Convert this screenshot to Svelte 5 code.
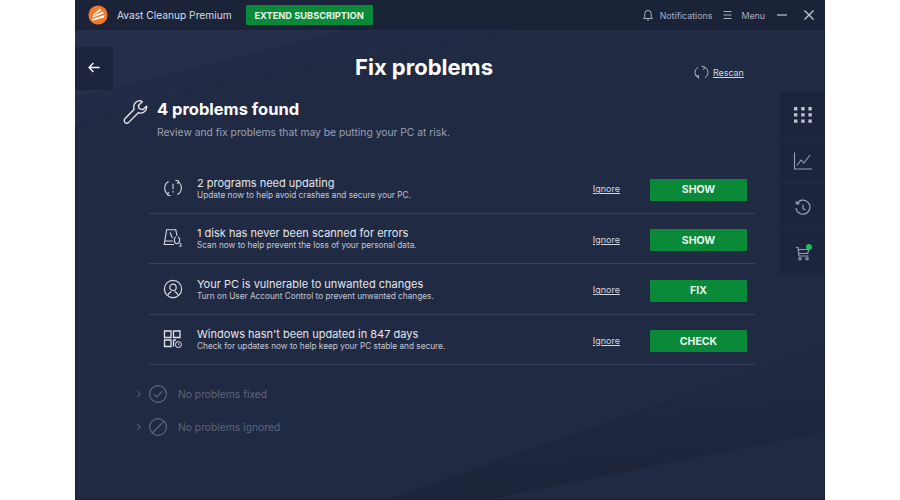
<script>
  const problems = [
    { icon: 'update', title: '2 programs need updating', text: 'Update now to help avoid crashes and secure your PC.', action: 'SHOW' },
    { icon: 'disk', title: '1 disk has never been scanned for errors', text: 'Scan now to help prevent the loss of your personal data.', action: 'SHOW' },
    { icon: 'user', title: 'Your PC is vulnerable to unwanted changes', text: 'Turn on User Account Control to prevent unwanted changes.', action: 'FIX' },
    { icon: 'windows', title: "Windows hasn't been updated in 847 days", text: 'Check for updates now to help keep your PC stable and secure.', action: 'CHECK' }
  ];
</script>

<div class="window">
  <svg class="backdrop" viewBox="0 0 750 500" aria-hidden="true">
    <defs>
      <linearGradient id="shade" x1="0.75" y1="0.9" x2="0.55" y2="0.1">
        <stop offset="0" stop-color="#1a2136" stop-opacity="0.7" />
        <stop offset="1" stop-color="#1a2136" stop-opacity="0" />
      </linearGradient>
    </defs>
    <polygon points="0,98 270,30 0,30" fill="#262f4a" />
    <polygon points="270,30 440,30 130,85 0,125 0,98" fill="#232c46" />
    <polygon points="311,500 708,360 750,340 750,432 421,498" fill="url(#shade)" />
  </svg>

  <header class="titlebar">
    <svg class="logo" width="20" height="20" viewBox="0 0 20 20">
      <circle cx="10" cy="10" r="9.6" fill="#f5792a" />
      <path d="M3.6 14.2 16.4 10 16 12.6 4.4 15.8Z M4 11.6 15 6.6 15.6 8.4 4.6 12.6Z M5 9.4 12 3.8 13.4 5.2 5.6 10.2Z" fill="#fff" />
    </svg>
    <span class="brand">Avast Cleanup Premium</span>
    <button class="extend">EXTEND SUBSCRIPTION</button>
    <div class="spacer"></div>
    <svg class="tool" width="12" height="12" viewBox="0 0 12 12" fill="none" stroke="#a9afc0">
      <path d="M1.5 9.5h9L9.2 7.8V4.6a3.2 3.2 0 0 0-6.4 0v3.2ZM5 11h2" />
    </svg>
    <span class="tool-label notif">Notifications</span>
    <svg class="tool" width="12" height="12" viewBox="0 0 12 12" fill="none" stroke="#a9afc0">
      <path d="M1.5 2.5h8M1.5 6h8M1.5 9.5h8" />
    </svg>
    <span class="tool-label menu">Menu</span>
    <svg class="tool minimize" width="10" height="10" viewBox="0 0 10 10" stroke="#b9becd" stroke-width="1.3">
      <path d="M0 5h10" />
    </svg>
    <svg class="tool" width="10" height="10" viewBox="0 0 10 10" stroke="#c6cad6" stroke-width="1.3">
      <path d="M.5.5l9 9M9.5.5l-9 9" />
    </svg>
  </header>

  <div class="content">
    <main class="main">
      <div class="top">
        <button class="back" aria-label="Back">
          <svg width="12" height="11" viewBox="0 0 12 11" fill="none" stroke="#fff" stroke-width="1.3">
            <path d="M11.5 5.5H1M5.4 1 1 5.5 5.4 10" />
          </svg>
        </button>
        <h1>Fix problems</h1>
        <div class="rescan">
          <svg width="15" height="15" viewBox="0 0 15 15" fill="none" stroke="#a9afc0">
            <path d="M4.5 13A6 6 0 0 1 4.2 2.2M10.5 2A6 6 0 0 1 10.8 12.8M4.5 13.6 4.6 10.6 1.8 10.6M7.5 1 10.5 2 9.6 4.8" />
          </svg>
          <span>Rescan</span>
        </div>
      </div>

      <section class="summary">
        <svg class="wrench" width="26" height="26" viewBox="0 0 26 26" fill="none" stroke="#eceef3" stroke-width="1.3" stroke-linejoin="round">
          <path d="M16.6 1.7a6.3 6.3 0 0 0-5.4 8.6L1.9 19.8a2.8 2.8 0 0 0 0 3.6 2.8 2.8 0 0 0 3.8 0l9.6-9.7a6.3 6.3 0 0 0 8.4-6.6l-4 3.6-3.4-1-1-3.2 4-3.8a6 6 0 0 0-2.7-1Z" />
        </svg>
        <div>
          <h2>4 problems found</h2>
          <p>Review and fix problems that may be putting your PC at risk.</p>
        </div>
      </section>

      <ul class="list">
        {#each problems as p}
          <li class="row">
            <div class="row-icon">
              {#if p.icon === 'update'}
                <svg width="20" height="20" viewBox="0 0 20 20" fill="none" stroke="#d5d8e2" stroke-width="1.1">
                  <path d="M5 16.5A7.8 7.8 0 0 1 5.6 3.4M15 3.4a7.8 7.8 0 0 1-.6 13.2M12.3 2.2 15.4 3l-.8 3M7.7 17.8l-3-.8.8-3M10 5.8v5.4M10 13v1.4" />
                </svg>
              {:else if p.icon === 'disk'}
                <svg width="20" height="20" viewBox="0 0 20 20" fill="none" stroke="#d5d8e2" stroke-width="1.1">
                  <path d="M11 16.5H1.2L3.6 1.8h9.2l1.2 6M1.4 13h8.4M7 4.5 9.5 10M11.4 10.5v2.6a2.6 2.6 0 0 0 5.2 0v-2.6M11.4 10.5l1.4-1.6M16.6 10.5l-1.4-1.6M17.8 15v3.2h-1.6" />
                </svg>
              {:else if p.icon === 'user'}
                <svg width="20" height="20" viewBox="0 0 20 20" fill="none" stroke="#d5d8e2" stroke-width="1.2">
                  <circle cx="10" cy="10" r="8.6" />
                  <circle cx="10" cy="8.4" r="3.2" />
                  <path d="M4.8 16.4c.6-2.6 2-3.2 3.4-3.8M15.2 16.4c-.6-2.6-2-3.2-3.4-3.8" />
                </svg>
              {:else}
                <svg width="20" height="20" viewBox="0 0 20 20" fill="none" stroke="#e1e4ec" stroke-width="1.3">
                  <path d="M1.5 2h6.5v6.5H1.5ZM10.5 2H17v6.5h-6.5ZM1.5 11h6.5v6.5H1.5ZM10.5 11h2.5M10.5 11v6.5" />
                  <circle cx="15.4" cy="15.6" r="3" stroke-width="1" />
                  <path d="M15.4 14.2v1.5l1 .6" stroke-width=".8" />
                </svg>
              {/if}
            </div>
            <div class="row-text">
              <div class="row-title">{p.title}</div>
              <div class="row-sub">{p.text}</div>
            </div>
            <span class="ignore">Ignore</span>
            <button class="action">{p.action}</button>
          </li>
        {/each}
      </ul>

      <div class="collapsed">
        <div class="fold">
          <svg class="chev" width="6" height="8" viewBox="0 0 6 8" fill="none" stroke="#5f667c"><path d="M1 .8 4.4 4 1 7.2" /></svg>
          <svg width="20" height="20" viewBox="0 0 20 20" fill="none" stroke="#5f667c" stroke-width="1.2">
            <circle cx="10" cy="10" r="8.4" />
            <path d="M5.8 10.2 8.8 13l5.4-5.6" />
          </svg>
          <span>No problems fixed</span>
        </div>
        <div class="fold">
          <svg class="chev" width="6" height="8" viewBox="0 0 6 8" fill="none" stroke="#5f667c"><path d="M1 .8 4.4 4 1 7.2" /></svg>
          <svg width="20" height="20" viewBox="0 0 20 20" fill="none" stroke="#5f667c" stroke-width="1.2">
            <circle cx="10" cy="10" r="8.4" />
            <path d="M4.2 16 16 4.2" />
          </svg>
          <span>No problems ignored</span>
        </div>
      </div>
    </main>

    <nav class="rail">
      <div class="rail-item">
        <svg width="20" height="20" viewBox="0 0 20 20" fill="#bfc3ce">
          <path d="M1 2h3.4v3.4H1ZM8.2 2h3.4v3.4H8.2ZM15.4 2h3.4v3.4h-3.4ZM1 8.2h3.4v3.4H1ZM8.2 8.2h3.4v3.4H8.2ZM15.4 8.2h3.4v3.4h-3.4ZM1 14.4h3.4v3.4H1ZM8.2 14.4h3.4v3.4H8.2ZM15.4 14.4h3.4v3.4h-3.4Z" />
        </svg>
      </div>
      <div class="rail-item">
        <svg width="20" height="20" viewBox="0 0 20 20" fill="none" stroke="#989eb1" stroke-width="1.1">
          <path d="M1.5 1.5v16.5h17.5M4 14.5l4-5.5 3 3 6-8" />
        </svg>
      </div>
      <div class="rail-item history">
        <svg width="18" height="18" viewBox="0 0 18 18" fill="none" stroke="#989eb1" stroke-width="1.2">
          <path d="M3 4.5A7 7 0 1 1 2 9M1.8 2.2l1 2.8 2.8-.6M9 5.5V9.4l2.6 1.6" />
        </svg>
      </div>
      <div class="rail-item cart">
        <svg width="18" height="18" viewBox="0 0 18 18" fill="none" stroke="#989eb1" stroke-width="1.2">
          <path d="M2 3.5h2l1 8.5h9.5M4.3 5.5h10.4l-1 4H4.8" />
          <circle cx="6" cy="14.8" r="1.2" />
          <circle cx="13" cy="14.8" r="1.2" />
        </svg>
        <span class="dot"></span>
      </div>
    </nav>
  </div>
</div>

<style>
  :global(body) {
    margin: 0;
    background: #fff;
  }

  .window {
    position: relative;
    width: 750px;
    height: 500px;
    margin-left: 75px;
    background: #212a43;
    box-shadow: inset 1px 0 0 #1a2136, inset -1px 0 0 #1a2136, inset 0 -1px 0 #1a2136;
    color: #fff;
    font-family: Inter, "Liberation Sans", sans-serif;
    overflow: hidden;
  }

  .backdrop {
    position: absolute;
    inset: 0;
  }

  .titlebar {
    position: relative;
    display: flex;
    align-items: center;
    height: 30px;
    padding: 0 11px 0 13px;
    background: #1b2338;
  }

  .logo {
    margin-right: 9px;
  }

  .brand {
    font-size: 10.2px;
    color: #d9dce5;
  }

  .extend {
    margin-left: 14px;
    width: 127px;
    height: 20px;
    padding: 0;
    border: 0;
    border-radius: 1px;
    background: #0a8a38;
    color: #e8f3ec;
    font: 700 9.25px Inter, "Liberation Sans", sans-serif;
  }

  .spacer {
    flex: 1;
  }

  .tool-label {
    font-size: 8.85px;
    color: #a9afc0;
  }

  .notif {
    margin: 0 10px 0 6px;
  }

  .menu {
    margin: 0 12px 0 7px;
  }

  .minimize {
    margin-right: 17px;
  }

  .content {
    position: relative;
    display: flex;
    height: 470px;
  }

  .main {
    flex: 1;
    min-width: 0;
  }

  .top {
    display: grid;
    grid-template-columns: 38px 1fr 85px;
    align-items: start;
    padding-top: 17px;
  }

  .back {
    width: 38px;
    height: 43px;
    padding: 0;
    border: 0;
    background: #1d253e;
  }

  h1 {
    margin: 5px 0 0;
    padding-left: 40px;
    text-align: center;
    font-size: 22px;
    font-weight: 700;
    line-height: 30px;
    color: #fff;
  }

  .rescan {
    display: flex;
    align-items: center;
    gap: 4px;
    margin: 18px 0 0 -1px;
    font-size: 8.9px;
    color: #d5d8e2;
  }

  .rescan span {
    text-decoration: underline;
  }

  .summary {
    display: flex;
    gap: 8px;
    margin: 9px 0 0 48px;
  }

  h2 {
    margin: 0;
    font-size: 16.5px;
    font-weight: 700;
    line-height: 20px;
  }

  .summary p {
    margin: 6px 0 0;
    font-size: 10.3px;
    line-height: 14px;
    color: #9aa1b4;
  }

  .list {
    margin: 24px 0 0 74px;
    padding: 0;
    width: 606px;
    list-style: none;
  }

  .row {
    display: flex;
    align-items: center;
    height: 50.5px;
    padding-top: 4px;
    box-sizing: border-box;
    border-bottom: 1px solid #3a4259;
  }

  .row-icon {
    display: flex;
    justify-content: center;
    width: 48px;
    margin-top: -4px;
  }

  .row-text {
    flex: 1;
    min-width: 0;
    margin-top: -3px;
  }

  .row-title {
    font-size: 11px;
    line-height: 14px;
    color: #e4e6ed;
  }

  .row-sub {
    margin-top: 0;
    font-size: 8.25px;
    line-height: 11px;
    color: #c3c7d3;
  }

  .ignore {
    margin: -2px 30px 0 0;
    font-size: 9px;
    color: #d5d8e2;
    text-decoration: underline;
  }

  .action {
    width: 97px;
    height: 22px;
    margin-right: 8px;
    padding: 0;
    border: 0;
    background: #0a8a38;
    color: #eaf4ee;
    font: 700 10.5px Inter, "Liberation Sans", sans-serif;
  }

  .collapsed {
    margin: 19px 0 0 61px;
    display: flex;
    flex-direction: column;
    gap: 13px;
  }

  .fold {
    display: flex;
    align-items: center;
    height: 20px;
    font-size: 10.3px;
    color: #5d6479;
  }

  .chev {
    margin-right: 6px;
  }

  .fold span {
    margin-left: 10px;
  }

  .rail {
    flex: none;
    width: 45px;
    margin-top: 62px;
  }

  .rail-item {
    position: relative;
    display: flex;
    align-items: center;
    justify-content: center;
    height: 46px;
    box-sizing: border-box;
    background: #1d253e;
    border-bottom: 1px solid #232b42;
  }

  .history svg {
    margin-top: 2px;
  }

  .dot {
    position: absolute;
    top: 14px;
    left: 26px;
    width: 6px;
    height: 6px;
    border-radius: 50%;
    background: #1bbf55;
  }
</style>
